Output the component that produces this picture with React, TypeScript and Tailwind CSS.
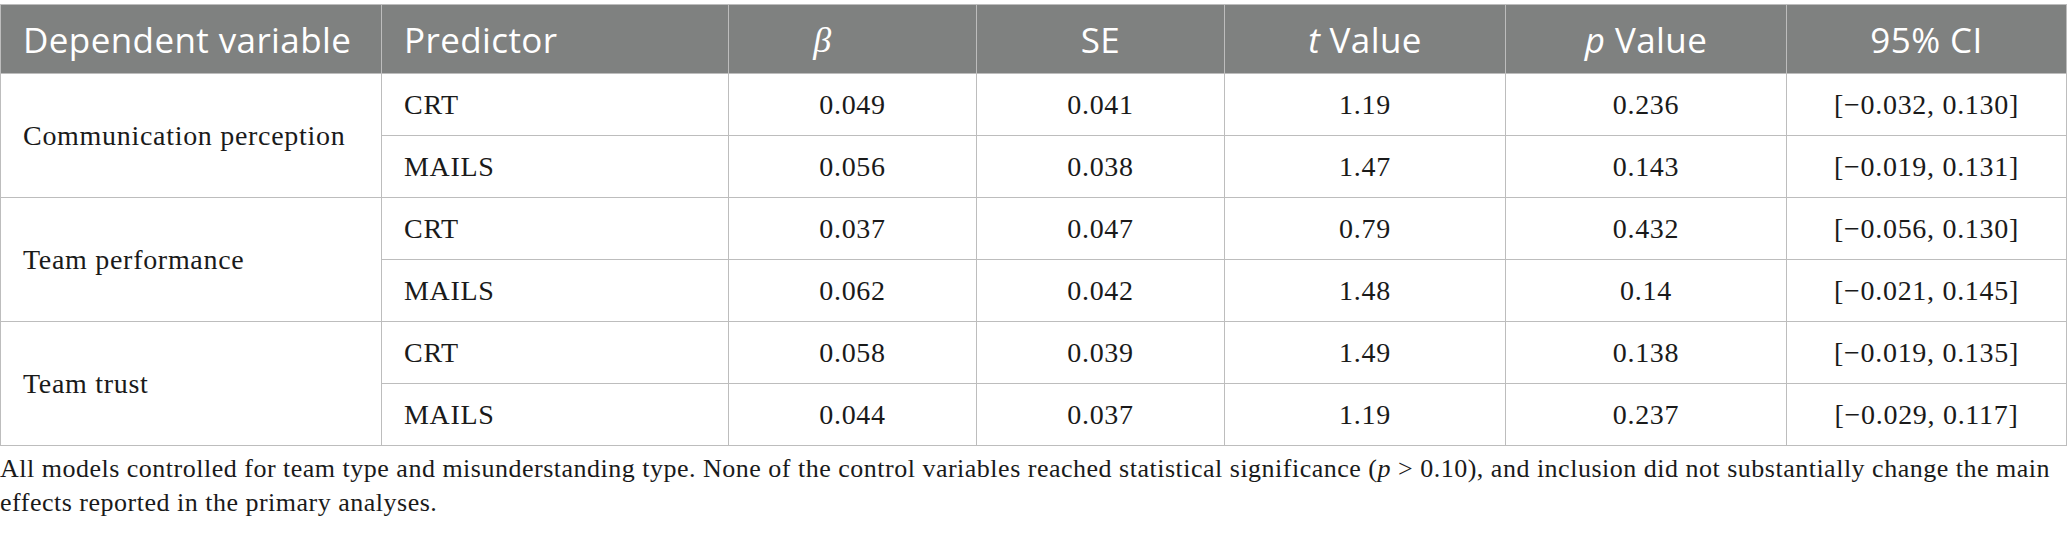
import React from 'react';

type Row = {
  predictor: string;
  beta: string;
  se: string;
  t: string;
  p: string;
  ci: string;
};

type Group = {
  label: string;
  rows: Row[];
};

const groups: Group[] = [
  {
    label: 'Communication perception',
    rows: [
      { predictor: 'CRT', beta: '0.049', se: '0.041', t: '1.19', p: '0.236', ci: '[−0.032, 0.130]' },
      { predictor: 'MAILS', beta: '0.056', se: '0.038', t: '1.47', p: '0.143', ci: '[−0.019, 0.131]' },
    ],
  },
  {
    label: 'Team performance',
    rows: [
      { predictor: 'CRT', beta: '0.037', se: '0.047', t: '0.79', p: '0.432', ci: '[−0.056, 0.130]' },
      { predictor: 'MAILS', beta: '0.062', se: '0.042', t: '1.48', p: '0.14', ci: '[−0.021, 0.145]' },
    ],
  },
  {
    label: 'Team trust',
    rows: [
      { predictor: 'CRT', beta: '0.058', se: '0.039', t: '1.49', p: '0.138', ci: '[−0.019, 0.135]' },
      { predictor: 'MAILS', beta: '0.044', se: '0.037', t: '1.19', p: '0.237', ci: '[−0.029, 0.117]' },
    ],
  },
];

const th = "border border-[#bdbdbd] font-normal text-[35px] leading-none";
const td = "border border-[#bdbdbd] text-center";

export default function App() {
  return (
    <div className="w-[2068px] bg-white pt-[4px] text-[#1a1a1a]">
      <table className="w-[2066px] table-fixed border-collapse font-['Liberation_Serif',serif] text-[28px] tracking-[0.7px]">
        <colgroup>
          <col className="w-[381px]" />
          <col className="w-[347px]" />
          <col className="w-[248px]" />
          <col className="w-[248px]" />
          <col className="w-[281px]" />
          <col className="w-[281px]" />
          <col className="w-[280px]" />
        </colgroup>
        <thead>
          <tr className="h-[69px] bg-[#7f8180] text-white font-['Open_Sans',sans-serif] tracking-[0.4px]">
            <th className={`${th} text-left pl-[22px]`}>Dependent variable</th>
            <th className={`${th} text-left pl-[22px]`}>Predictor</th>
            <th className={`${th} text-center pr-[60px]`}>
              <span className="font-['Liberation_Serif',serif] italic text-[36px]">β</span>
            </th>
            <th className={`${th} text-center`}>SE</th>
            <th className={`${th} text-center`}>
              <span className="italic">t</span> Value
            </th>
            <th className={`${th} text-center`}>
              <span className="italic">p</span> Value
            </th>
            <th className={`${th} text-center`}>95% CI</th>
          </tr>
        </thead>
        <tbody>
          {groups.map((g) =>
            g.rows.map((r, i) => (
              <tr key={g.label + r.predictor} className="h-[62px]">
                {i === 0 && (
                  <td rowSpan={g.rows.length} className="border border-[#bdbdbd] pl-[22px] text-left">
                    {g.label}
                  </td>
                )}
                <td className="border border-[#bdbdbd] pl-[22px] text-left">{r.predictor}</td>
                <td className={td}>{r.beta}</td>
                <td className={td}>{r.se}</td>
                <td className={td}>{r.t}</td>
                <td className={td}>{r.p}</td>
                <td className={td}>{r.ci}</td>
              </tr>
            ))
          )}
        </tbody>
      </table>
      <p className="mt-[6px] font-['Liberation_Serif',serif] text-[26px] leading-[34px] tracking-[0.5px] text-[#1a1a1a]">
        All models controlled for team type and misunderstanding type. None of the control variables reached
        statistical significance (<span className="italic">p</span> &gt; 0.10), and inclusion did not substantially
        change the main effects reported in the primary analyses.
      </p>
    </div>
  );
}
